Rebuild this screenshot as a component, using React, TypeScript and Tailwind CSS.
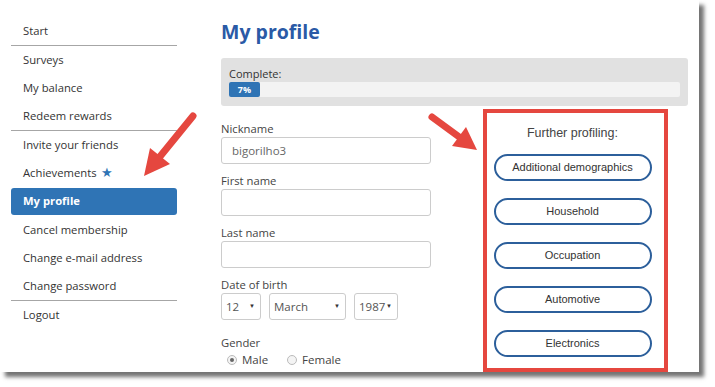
import React from "react";

const sidebarGroups = [
  ["Start"],
  ["Surveys", "My balance", "Redeem rewards"],
  ["Invite your friends", "Achievements", "My profile", "Cancel membership", "Change e-mail address", "Change password"],
  ["Logout"],
];

const profiling = ["Additional demographics", "Household", "Occupation", "Automotive", "Electronics"];

function Field({ label, value }: { label: string; value?: string }) {
  return (
    <div className="mb-[9px]">
      <div className="text-[11.25px] leading-[16px] text-[#444]">{label}</div>
      <div className="w-[210px] h-[27px] border border-[#ccc] rounded-[3px] px-[10px] flex items-center text-[11.5px] text-[#666]">
        {value}
      </div>
    </div>
  );
}

function Select({ value, w }: { value: string; w: string }) {
  return (
    <div className={`${w} h-[27px] border border-[#ccc] rounded-[3px] pl-[4px] pr-[5px] flex items-center justify-between text-[11.5px] text-[#555]`}>
      <span>{value}</span>
      <span className="text-[6px] text-[#333]">▼</span>
    </div>
  );
}

export default function App() {
  return (
    <div className="relative w-[715px] h-[387px] bg-white overflow-hidden" style={{ fontFamily: '"Open Sans", "Liberation Sans", sans-serif' }}>
      <div className="w-[699px] h-[372px] bg-white shadow-[5px_5px_4px_rgba(0,0,0,0.55)] flex overflow-hidden">
        {/* sidebar */}
        <div className="w-[166px] ml-[11px] mt-[17px] shrink-0">
          {sidebarGroups.map((group, gi) => (
            <div key={gi} className={gi < sidebarGroups.length - 1 ? "border-b-[1.5px] border-[#a6a6a6]" : ""}>
              {group.map(item => (
                <div
                  key={item}
                  className={
                    item === "My profile"
                      ? "h-[27px] my-[1px] pl-[12px] flex items-center text-[11.25px] font-bold text-white bg-[#2f74b5] rounded-[3px]"
                      : "h-[28px] pl-[12px] flex items-center text-[11.25px] text-[#333]"
                  }
                >
                  {item}
                  {item === "Achievements" && <span className="ml-[4px] text-[#2f74b5] text-[13px]">★</span>}
                </div>
              ))}
            </div>
          ))}
        </div>

        {/* main */}
        <div className="ml-[44px] flex-1 pr-[11px]">
          <h1 className="mt-[19px] text-[19.5px] leading-[26px] font-bold text-[#2a5aa6]">My profile</h1>
          <div className="mt-[13px] h-[48px] bg-[#e1e1e1] rounded-[3px] px-[8px] pt-[8px]">
            <div className="text-[11px] leading-[16px] text-[#333]">Complete:</div>
            <div className="h-[15px] bg-[#f3f3f3] rounded-[2px] flex">
              <div className="w-[31px] h-full bg-[#2f74b5] rounded-[2px] flex items-center justify-center text-[9px] font-bold text-white">7%</div>
            </div>
          </div>

          <div className="flex mt-[15px]">
            <div className="w-[262px] shrink-0">
              <Field label="Nickname" value="bigorilho3" />
              <Field label="First name" />
              <Field label="Last name" />
              <div className="text-[11.25px] leading-[16px] text-[#444]">Date of birth</div>
              <div className="flex gap-[8px]">
                <Select value="12" w="w-[40px]" />
                <Select value="March" w="w-[77px]" />
                <Select value="1987" w="w-[44px]" />
              </div>
              <div className="mt-[15px] text-[11.25px] leading-[16px] text-[#444]">Gender</div>
              <div className="flex items-center ml-[6px] mt-[1px] h-[16px] text-[11.5px] text-[#444]">
                <span className="w-[10px] h-[10px] rounded-full border border-[#bbb] bg-[#f4f4f4] flex items-center justify-center">
                  <span className="w-[4px] h-[4px] rounded-full bg-[#666]" />
                </span>
                <span className="ml-[5px]">Male</span>
                <span className="ml-[19px] w-[10px] h-[10px] rounded-full border border-[#bbb] bg-[#f4f4f4]" />
                <span className="ml-[5px]">Female</span>
              </div>
            </div>

            <div className="-mt-[12px] w-[185px] h-[263px] border-[4px] border-[#e5473f] flex flex-col items-center pt-[11px] pr-[6px]" style={{ fontFamily: '"Liberation Sans", Arial, sans-serif' }}>
              <div className="text-[12.5px] text-[#444]">Further profiling:</div>
              <div className="mt-[11px] flex flex-col gap-[17px]">
                {profiling.map(p => (
                  <div key={p} className="w-[158px] h-[27px] rounded-full border-2 border-[#2c5f9b] flex items-center justify-center text-[11px] text-[#333]">
                    {p}
                  </div>
                ))}
              </div>
            </div>
          </div>
        </div>
      </div>

      {/* red annotation arrows */}
      <svg className="absolute left-0 top-0 pointer-events-none" width="715" height="387">
        <g fill="#e5473f" stroke="none">
          <line x1="193" y1="116" x2="158" y2="159" stroke="#e5473f" strokeWidth="7" strokeLinecap="round" />
          <polygon points="144,176 150,148 170,164" />
          <line x1="432" y1="117" x2="462" y2="139" stroke="#e5473f" strokeWidth="7" strokeLinecap="round" />
          <polygon points="477,150 452,146 466,127" />
        </g>
      </svg>
    </div>
  );
}
